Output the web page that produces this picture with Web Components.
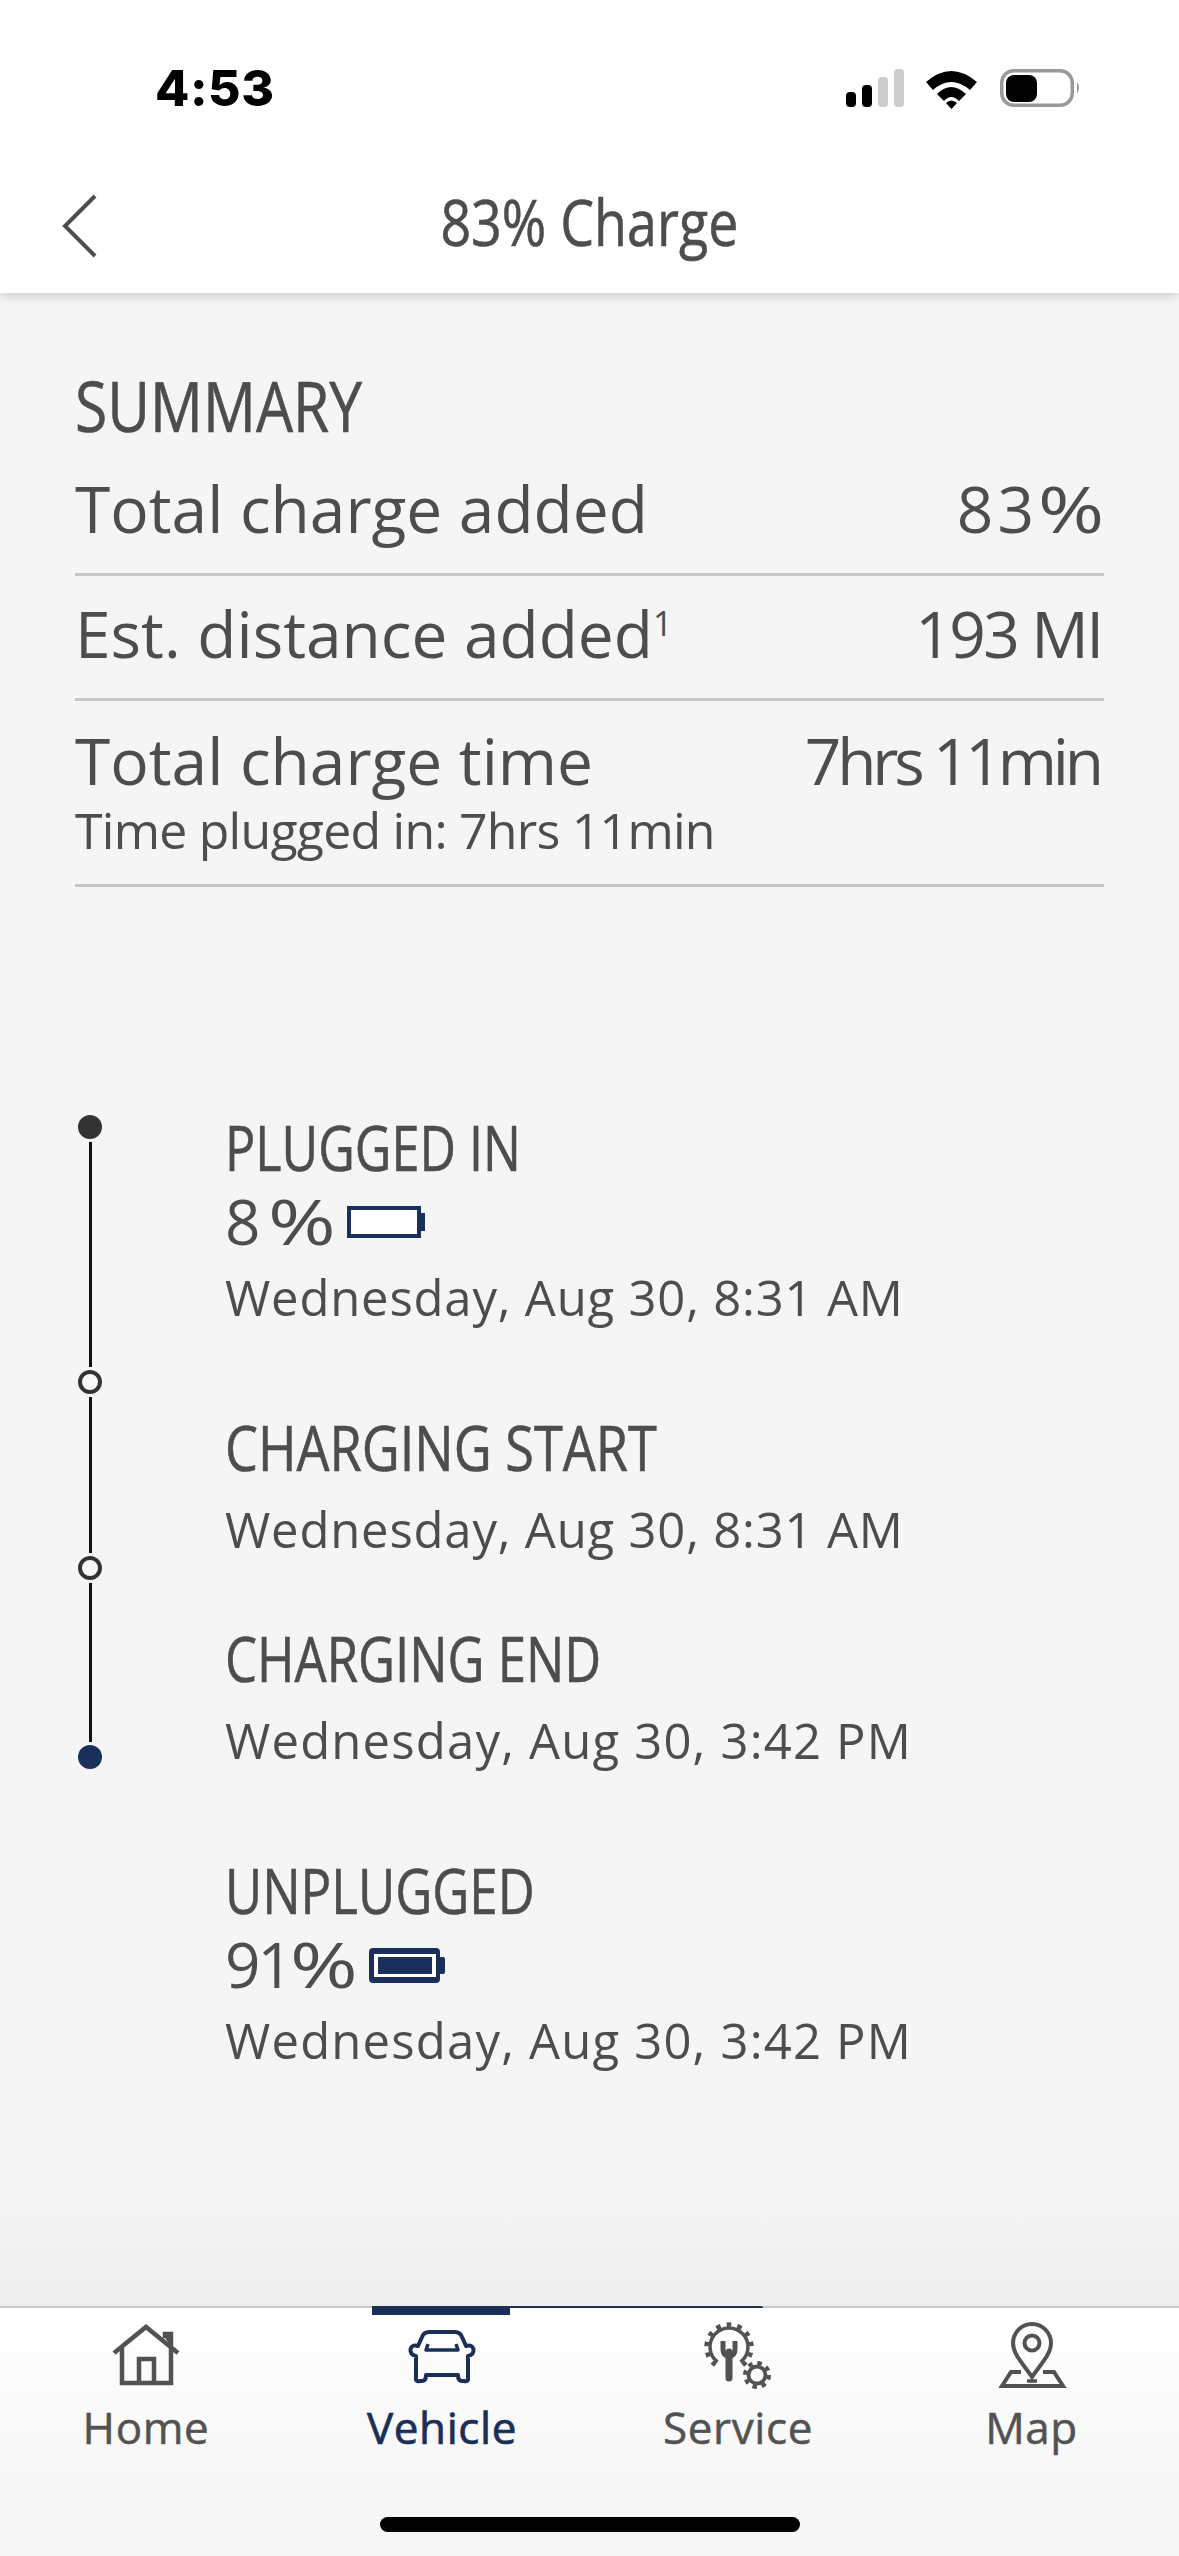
<!DOCTYPE html>
<html lang="en">
<head>
<meta charset="utf-8">
<title>83% Charge</title>
<style>
  html, body { margin: 0; padding: 0; background: #f5f5f5; }
  body { width: 1179px; height: 2556px; overflow: hidden; font-family: "Open Sans", "Noto Sans", "Liberation Sans", sans-serif; color: #4d4d4d; }
  charge-page { height: 2556px; }
</style>
</head>
<body>
<charge-page>
  <status-bar slot="top" time="4:53"></status-bar>
  <nav-header slot="top">83% Charge</nav-header>

  <summary-panel heading="SUMMARY">
    <summary-row value="83%" track="4">Total charge added</summary-row>
    <summary-row value="193 MI" track="-2.600">Est. distance added<sup>1</sup></summary-row>
    <summary-row value="7hrs 11min" track="-4.200" note="Time plugged in: 7hrs 11min">Total charge time</summary-row>
  </summary-panel>

  <charge-timeline>
    <charge-event title="PLUGGED IN" squeeze=".812" level="8%" track="8" when="Wednesday, Aug 30, 8:31 AM" when-track=".82" gap="0"></charge-event>
    <charge-event title="CHARGING START" squeeze=".843" when="Wednesday, Aug 30, 8:31 AM" when-track=".82" gap="83"></charge-event>
    <charge-event title="CHARGING END" squeeze=".82" when="Wednesday, Aug 30, 3:42 PM" when-track="1.2" gap="62"></charge-event>
    <charge-event title="UNPLUGGED" squeeze=".823" level="91%" track="-3" full when="Wednesday, Aug 30, 3:42 PM" when-track="1.2" gap="83"></charge-event>
  </charge-timeline>

  <tab-bar slot="bottom">
    <tab-item label="Home" icon="home"></tab-item>
    <tab-item label="Vehicle" icon="vehicle" active></tab-item>
    <tab-item label="Service" icon="service"></tab-item>
    <tab-item label="Map" icon="map"></tab-item>
  </tab-bar>
</charge-page>

<script>
// the % in the original font is much wider than any installed one
const widePercent = (text) => text.replace('%', '<span class="pct">%</span>');

const ICONS = {
  home: `<svg style="margin-bottom:3px" width="70" height="62" viewBox="0 0 70 62" fill="none" stroke="#525252" stroke-width="4.5">
      <path d="M3 29 L35 3 L67 29"/>
      <path d="M11 24 V59 H60 V24"/>
      <path d="M28 59 V35 H43 V59"/>
      <path d="M54 14 V10 H60 V22" fill="#525252"/>
    </svg>`,
  vehicle: `<svg style="margin-bottom:4px" width="70" height="56" viewBox="0 0 70 56" fill="none" stroke="#1a2f55" stroke-width="4" stroke-linejoin="round">
      <path d="M22 3 H48 Q53 3 55 8 L59 17 Q65 15 66.500 20 Q67 26 61 27 V48 Q62 53 57 52 H55 Q51 52 51 46 H19 Q19 52 15 52 H13 Q8 53 9 48 V27 Q3 26 3.500 20 Q5 15 11 17 L15 8 Q17 3 22 3 Z"/>
      <path d="M21 15 L19 21 H51 L49 15" stroke-width="3.500"/>
    </svg>`,
  service: `<svg width="72" height="69" viewBox="0 0 72 69" fill="none" stroke="#525252" style="overflow:visible">
      <path d="M15.500 42 A19 19 0 1 1 38.500 42" stroke-width="3.500"/>
      <path d="M13.400 45 A22.500 22.500 0 1 1 40.600 45" stroke-width="4.500" stroke-dasharray="4.500 6.200"/>
      <path d="M27 32 V58" stroke-width="7" stroke-linecap="round"/>
      <path d="M21 21 V29 Q21 36 27 36 Q33 36 33 29 V21" stroke-width="5"/>
      <circle cx="55" cy="55" r="8.500" stroke-width="3.800"/>
      <circle cx="55" cy="55" r="12" stroke-width="4" stroke-dasharray="4.500 4.925"/>
    </svg>`,
  map: `<svg width="70" height="67" viewBox="0 0 70 67" fill="none" stroke="#525252" stroke-width="4">
      <path d="M35 55 C28 44 16 33 16 21 A19 19 0 0 1 54 21 C54 33 42 44 35 55 Z"/>
      <circle cx="35" cy="21" r="7.500"/>
      <path d="M24 50 H14 L5 64 H66 L57 50 H46"/>
      <path d="M30 59 H40" stroke-width="3.500"/>
    </svg>`
};

class ChargePage extends HTMLElement {
  connectedCallback() {
    this.attachShadow({ mode: 'open' });
    this.shadowRoot.innerHTML = `
      <style>
        :host { display: flex; flex-direction: column; width: 1179px; }
        header { background: #fff; height: 293px; box-shadow: 0 3px 10px rgba(0,0,0,.16); position: relative; z-index: 1; flex: none; }
        main { flex: 1; min-height: 0; background: linear-gradient(#f5f5f5 1900px, #eeeeee 100%); }
        footer { flex: none; }
      </style>
      <header><slot name="top"></slot></header>
      <main><slot></slot></main>
      <footer><slot name="bottom"></slot></footer>
    `;
  }
}

class StatusBar extends HTMLElement {
  connectedCallback() {
    this.attachShadow({ mode: 'open' });
    this.shadowRoot.innerHTML = `
      <style>
        :host { display: flex; justify-content: space-between; align-items: flex-start; height: 160px; padding: 60px 98px 0 155px; box-sizing: border-box; }
        .time { font: 800 50px/56px Inter, "Liberation Sans", sans-serif; color: #000; letter-spacing: 0.5px; }
        .icons { display: flex; margin-top: 9px; }
        svg { display: block; }
      </style>
      <span class="time">${this.getAttribute('time')}</span>
      <div class="icons">
        <svg width="236" height="40" viewBox="0 0 236 40">
          <rect x="1" y="23" width="10" height="15" rx="4"/>
          <rect x="17" y="16" width="10" height="22" rx="4"/>
          <rect x="33" y="8" width="10" height="30" rx="4" fill="#cccccc"/>
          <rect x="49" y="0" width="10" height="38" rx="4" fill="#cccccc"/>
          <path d="M81 13 Q106 -9 132 13 L125 21 Q106 5 88 21 Z"/>
          <path d="M92 25 Q106 11 121 25 L114 32 Q106 24 99 32 Z" />
          <path d="M101 34 Q106 29 112 34 L106.500 40 Z"/>
          <rect x="156.750" y="1.750" width="70.500" height="34.500" rx="12" fill="none" stroke="#999" stroke-width="3.500"/>
          <rect x="161" y="6" width="31" height="27" rx="8"/>
          <path d="M232 13 Q236 18 232 25 Z" fill="#999"/>
        </svg>
      </div>
    `;
  }
}

class NavHeader extends HTMLElement {
  connectedCallback() {
    this.attachShadow({ mode: 'open' });
    this.shadowRoot.innerHTML = `
      <style>
        :host { display: flex; justify-content: center; align-items: center; position: relative; height: 133px; }
        .back { position: absolute; left: 60px; top: 33px; display: block; }
        .title { font-size: 64px; line-height: 70px; color: #4d4d4d; display: inline-block; transform: scaleX(.84); margin-top: -10px; white-space: nowrap; -webkit-text-stroke: .6px #4d4d4d; }
      </style>
      <svg class="back" width="40" height="66" viewBox="0 0 40 66" fill="none" stroke="#4d4d4d" stroke-width="4">
        <path d="M35 3 L5 33 L35 63"/>
      </svg>
      <span class="title"><slot></slot></span>
    `;
  }
}

class SummaryPanel extends HTMLElement {
  connectedCallback() {
    this.attachShadow({ mode: 'open' });
    this.shadowRoot.innerHTML = `
      <style>
        :host { display: block; padding: 69px 75px 0; }
        h2 { margin: 0; height: 89px; font-size: 70px; line-height: 86px; font-weight: 400; color: #4d4d4d; transform: scaleX(.84); transform-origin: left; white-space: nowrap; -webkit-text-stroke: .6px #4d4d4d; }
      </style>
      <h2>${this.getAttribute('heading')}</h2>
      <slot></slot>
    `;
  }
}

class SummaryRow extends HTMLElement {
  connectedCallback() {
    const note = this.getAttribute('note');
    const track = parseFloat(this.getAttribute('track'));
    this.attachShadow({ mode: 'open' });
    this.shadowRoot.innerHTML = `
      <style>
        :host { display: block; border-bottom: 3px solid #c6c6c6; padding: 18px 0 25px; font-size: 64px; line-height: 79px; }
        :host([note]) { padding: 20px 0 23px; }
        .line { display: flex; justify-content: space-between; white-space: nowrap; }
        .value { letter-spacing: ${track}px; margin-right: ${-track}px; }
        .pct { display: inline-block; width: 65px; margin-right: 5px; transform: scaleX(1.25); transform-origin: left; letter-spacing: 0; }
        .note { font-size: 50px; line-height: 62px; margin-top: -1px; letter-spacing: -.75px; }
        ::slotted(sup) { font-size: 34px; line-height: 0; vertical-align: 22px; }
      </style>
      <div class="line"><span><slot></slot></span><span class="value">${widePercent(this.getAttribute('value'))}</span></div>
      ${note ? `<div class="note">${note}</div>` : ''}
    `;
  }
}

class ChargeTimeline extends HTMLElement {
  connectedCallback() {
    this.attachShadow({ mode: 'open' });
    this.shadowRoot.innerHTML = `
      <style>
        :host { display: flex; padding: 228px 0 0 78px; }
        .rail { display: flex; flex-direction: column; align-items: center; width: 24px; margin-right: 123px; flex: none; }
        .dot { width: 24px; height: 24px; border-radius: 50%; box-sizing: border-box; flex: none; }
        .start { background: #333; }
        .stop { background: #f8f8f8; border: 4px solid #333; }
        .end { background: #1a2f5a; }
        .seg { width: 3px; background: #111; margin: 3px 0; flex: none; }
      </style>
      <div class="rail">
        <div class="dot start"></div>
        <div class="seg" style="height:225px"></div>
        <div class="dot stop"></div>
        <div class="seg" style="height:156px"></div>
        <div class="dot stop"></div>
        <div class="seg" style="height:159px"></div>
        <div class="dot end"></div>
      </div>
      <div class="events"><slot></slot></div>
    `;
  }
}

class BatteryIcon extends HTMLElement {
  connectedCallback() {
    const full = this.hasAttribute('full');
    this.attachShadow({ mode: 'open' });
    this.shadowRoot.innerHTML = `
      <style>
        :host { display: inline-block; line-height: 0; }
      </style>
      ${full ? `<svg width="76" height="35" viewBox="0 0 76 35">
        <rect width="71" height="35" rx="4" fill="#1a2f5a"/>
        <rect x="5" y="6" width="62" height="23" fill="#fff"/>
        <rect x="9" y="9" width="54" height="17" fill="#1a2f5a"/>
        <rect x="70" y="9" width="6" height="17" rx="2" fill="#1a2f5a"/>
      </svg>` : `<svg width="78" height="32" viewBox="0 0 78 32">
        <rect x="2" y="2" width="70" height="28" fill="#fff" stroke="#1a2f5a" stroke-width="4"/>
        <rect x="73" y="7" width="5" height="18" fill="#1a2f5a"/>
      </svg>`}
    `;
  }
}

class ChargeEvent extends HTMLElement {
  connectedCallback() {
    const level = this.getAttribute('level');
    const full = this.hasAttribute('full');
    this.attachShadow({ mode: 'open' });
    this.shadowRoot.innerHTML = `
      <style>
        :host { display: block; margin-top: ${this.getAttribute('gap')}px; }
        .title { font-size: 62px; line-height: 64px; height: 64px; transform: scaleX(${this.getAttribute('squeeze')}); transform-origin: left; white-space: nowrap; -webkit-text-stroke: .6px #4d4d4d; }
        .level { display: flex; align-items: center; gap: 15px; margin-top: 6px; font-size: 62px; line-height: 72px; height: 72px; white-space: nowrap; }
        .digits { letter-spacing: ${this.getAttribute('track') || 0}px; }
        .pct { display: inline-block; width: 64px; transform: scaleX(1.32); transform-origin: left; letter-spacing: 0; }
        battery-icon { margin-top: 2px; }
        .when { font-size: 49px; line-height: 70px; height: 70px; letter-spacing: ${this.getAttribute('when-track')}px; white-space: nowrap; }
        .level + .when { margin-top: 5px; }
        .title + .when { margin-top: 15px; }
      </style>
      <div class="title">${this.getAttribute('title')}</div>
      ${level ? `<div class="level"><span class="digits">${widePercent(level)}</span><battery-icon ${full ? 'full' : ''}></battery-icon></div>` : ''}
      <div class="when">${this.getAttribute('when')}</div>
    `;
  }
}

class TabBar extends HTMLElement {
  connectedCallback() {
    this.attachShadow({ mode: 'open' });
    this.shadowRoot.innerHTML = `
      <style>
        :host { display: block; position: relative; height: 250px; border-top: 2px solid #c9c9c9; box-sizing: border-box; background: linear-gradient(#fff, #f6f6f6 75%); }
        .tabs { display: grid; grid-template-columns: 292px 300px 292px 295px; }
        .sweep { position: absolute; left: 420px; top: -2px; width: 343px; height: 2px; background: #1a2f5a; border-radius: 2px 2px 0 0; }
        .home-bar { position: absolute; left: 380px; bottom: 24px; width: 420px; height: 15px; background: #000; border-radius: 8px; }
      </style>
      <div class="sweep"></div>
      <div class="tabs"><slot></slot></div>
      <div class="home-bar"></div>
    `;
  }
}

class TabItem extends HTMLElement {
  connectedCallback() {
    this.attachShadow({ mode: 'open' });
    this.shadowRoot.innerHTML = `
      <style>
        :host { display: flex; flex-direction: column; align-items: center; position: relative; font-size: 44px; color: #525252; -webkit-text-stroke: .5px #525252; }
        :host([active]) { color: #1a2f55; -webkit-text-stroke: .7px #1a2f55; }
        .icon { height: 81px; display: flex; align-items: flex-end; }
        svg { display: block; }
        .label { line-height: 60px; margin-top: 8px; letter-spacing: .6px; }
        .bar { position: absolute; top: -2px; left: 80px; width: 138px; height: 9px; background: #1a2f55; }
      </style>
      ${this.hasAttribute('active') ? '<div class="bar"></div>' : ''}
      <div class="icon">${ICONS[this.getAttribute('icon')]}</div>
      <div class="label">${this.getAttribute('label')}</div>
    `;
  }
}

customElements.define('charge-page', ChargePage);
customElements.define('status-bar', StatusBar);
customElements.define('nav-header', NavHeader);
customElements.define('summary-panel', SummaryPanel);
customElements.define('summary-row', SummaryRow);
customElements.define('charge-timeline', ChargeTimeline);
customElements.define('battery-icon', BatteryIcon);
customElements.define('charge-event', ChargeEvent);
customElements.define('tab-bar', TabBar);
customElements.define('tab-item', TabItem);
</script>
</body>
</html>
